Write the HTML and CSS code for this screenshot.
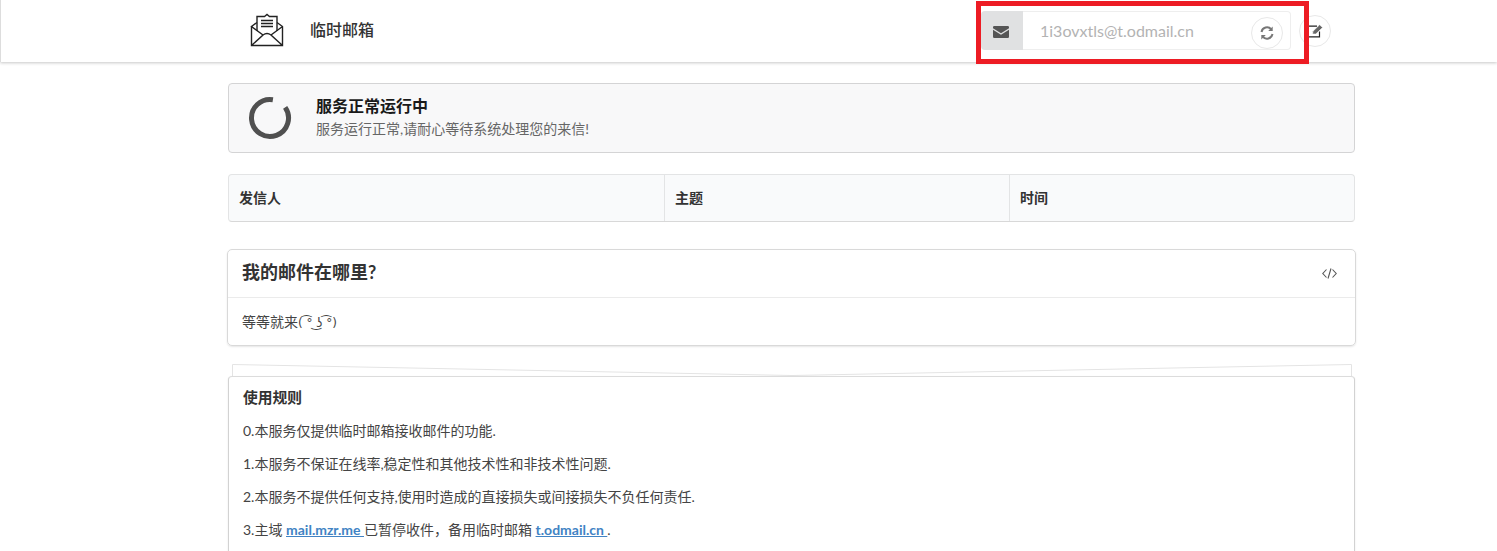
FILE: index.html
```html
<!DOCTYPE html>
<html lang="zh-CN">
<head>
<meta charset="utf-8">
<title>临时邮箱</title>
<link rel="stylesheet" href="styles.css">
</head>
<body>
<header class="topbar">
  <div class="brand">
    <svg class="logo" width="34" height="34" viewBox="0 0 34 34" fill="none" stroke="#222" stroke-width="1.4">
      <path d="M1.5 13.5V32.5H32.5V13.5L27 9.5M7 9.5L1.5 13.5L13 22L1.5 32.5M32.5 13.5L21 22L32.5 32.5M13 22Q17 19 21 22"/>
      <path d="M7 18V3.5H14.5L17 1.5L19.5 3.5H27V18" />
      <path d="M11 7.5H23M11 10.5H23M11 13.5H23" />
    </svg>
    <span class="brand-name">临时邮箱</span>
  </div>
  <div class="tools">
    <div class="addr">
      <span class="addr-label">
        <svg class="mail-icon" width="16" height="12" viewBox="0 0 16 12" fill="#555"><path d="M1.2 0H14.8A1.2 1.2 0 0 1 16 1.2V2.2L8 7.2L0 2.2V1.2A1.2 1.2 0 0 1 1.2 0ZM0 3.8L8 8.8L16 3.8V10.8A1.2 1.2 0 0 1 14.8 12H1.2A1.2 1.2 0 0 1 0 10.8Z"/></svg>
      </span>
      <div class="addr-field">
        <span class="addr-text">1i3ovxtls@t.odmail.cn</span>
        <span class="round-btn">
          <svg width="14" height="14" viewBox="0 0 14 14" fill="none" stroke="#777" stroke-width="2"><path d="M1.5 6A5.6 5.6 0 0 1 11.3 3.4M12.5 8A5.6 5.6 0 0 1 2.7 10.6"/><path d="M12.7 0.5V5H8.2ZM1.3 13.5V9H5.8Z" fill="#777" stroke="none"/></svg>
        </span>
      </div>
    </div>
    <span class="round-btn edit-btn">
      <svg width="17" height="14" viewBox="0 0 17 14" fill="none"><path d="M10 2.2H1.2V12.8H12.5V7.5" stroke="#222" stroke-width="1.2"/><path d="M5.5 10L6 7.2L12.6 .8L15.6 3.6L8.8 10Z" fill="#666" stroke="#fff" stroke-width=".6"/></svg>
    </span>
  </div>
</header>
<div class="highlight-box"></div>

<main class="page">
  <section class="status">
    <svg class="spinner" width="44" height="44" viewBox="0 0 44 44" fill="none"><path d="M37.15 11.38A18.5 18.5 0 1 1 24.9 3.73" stroke="#505050" stroke-width="5"/></svg>
    <div class="status-text">
      <div class="status-title">服务正常运行中</div>
      <div class="status-sub">服务运行正常,请耐心等待系统处理您的来信!</div>
    </div>
  </section>

  <section class="mail-table">
    <div class="th th-from">发信人</div>
    <div class="th th-subject">主题</div>
    <div class="th th-time">时间</div>
  </section>

  <section class="card">
    <div class="card-head">
      <h2 class="card-title">我的邮件在哪里?</h2>
      <svg class="code-icon" width="15" height="11" viewBox="0 0 15 11" fill="none" stroke="#555" stroke-width="1.1"><path d="M4.5 1.5L.8 5.5L4.5 9.5M10.5 1.5L14.2 5.5L10.5 9.5M9 .5L6 10.5"/></svg>
    </div>
    <div class="card-body">等等就来<span class="kaomoji">( ͡° ͜ʖ ͡°)</span></div>
  </section>

  <section class="stack">
    <svg class="stack-back" width="1120" height="12" viewBox="0 0 1120 12" preserveAspectRatio="none" fill="none" stroke="#e4e4e4"><path d="M.5 12V.5L560 11.5L1119.5 .5V12"/></svg>
    <div class="rules">
      <h3 class="rules-title">使用规则</h3>
      <p>0.本服务仅提供临时邮箱接收邮件的功能.</p>
      <p>1.本服务不保证在线率,稳定性和其他技术性和非技术性问题.</p>
      <p>2.本服务不提供任何支持,使用时造成的直接损失或间接损失不负任何责任.</p>
      <p>3.主域 <a href="#">mail.mzr.me </a>已暂停收件，备用临时邮箱 <a href="#">t.odmail.cn </a>.</p>
    </div>
  </section>
</main>
</body>
</html>
```

FILE: styles.css
```css
* { box-sizing: border-box; }
html, body { margin: 0; height: 551px; overflow: hidden; }
body {
  background: #fff;
  color: #333;
  font-family: Lato, "Noto Sans CJK SC", sans-serif;
  font-size: 14px;
  line-height: 20px;
  position: relative;
}
.topbar {
  height: 62px;
  display: flex;
  align-items: center;
  justify-content: space-between;
  padding: 0 166px 0 249px;
  border-left: 1px solid #ddd;
  box-shadow: 0 1px 3px rgba(0, 0, 0, .22);
}
.brand { display: flex; align-items: center; margin-top: -2px; }
.logo { display: block; }
.brand-name { margin-left: 26px; font-size: 16px; font-weight: 500; color: #333; }
.tools { display: flex; align-items: center; }
.addr { display: flex; height: 39px; width: 310px; margin-top: -1px; }
.addr-label {
  width: 42px;
  background: #e0e1e2;
  border-radius: 4px 0 0 4px;
  display: flex;
  align-items: center;
  justify-content: center;
}
.mail-icon { margin: 3px 2px 0 0; }
.addr-field {
  flex: 1;
  border: 1px solid #eee;
  border-left: 0;
  border-radius: 0 4px 4px 0;
  display: flex;
  align-items: center;
  justify-content: space-between;
  padding: 0 7px 0 17px;
}
.addr-text { color: #b3b3b3; font-size: 16px; }
.round-btn {
  width: 32px;
  height: 32px;
  border: 1px solid #e8e8e8;
  border-radius: 50%;
  background: #fff;
  display: inline-flex;
  align-items: center;
  justify-content: center;
  flex: none;
  margin-top: 5px;
}
.edit-btn { margin: 0 0 0 8px; }
.highlight-box {
  position: absolute;
  left: 976px;
  top: 1px;
  width: 333px;
  height: 63px;
  border: 5px solid #ed1c24;
  pointer-events: none;
}
.page { margin-left: 228px; width: 1127px; padding-top: 21px; }
.status {
  height: 70px;
  background: #f8f8f9;
  border: 1px solid #d4d4d5;
  border-radius: 4px;
  display: flex;
  align-items: center;
  padding-left: 19px;
}
.spinner { flex: none; }
.status-text { margin-left: 24px; margin-top: -3px; }
.status-title { font-size: 16px; font-weight: 700; color: #1a1a1a; line-height: 22px; }
.status-sub { font-size: 14px; color: #666; line-height: 20px; margin-top: 2px; }
.mail-table {
  height: 48px;
  margin-top: 21px;
  background: #f9fafb;
  border: 1px solid #e3e4e5;
  border-bottom-color: #d8d8d8;
  border-radius: 4px;
  display: grid;
  grid-template-columns: 435px 345px 1fr;
}
.th {
  display: flex;
  align-items: center;
  padding: 0 0 0 10px;
  font-size: 14px;
  font-weight: 700;
  color: #333;
  border-left: 1px solid #e3e4e5;
}
.th-from { border-left: 0; }
.card {
  width: 1129px;
  height: 97px;
  margin: 27px 0 0 -1px;
  border: 1px solid #d9d9d9;
  border-radius: 5px;
  box-shadow: 0 1px 2px rgba(0, 0, 0, .1);
}
.card-head {
  height: 48px;
  display: flex;
  align-items: center;
  justify-content: space-between;
  padding: 0 18px 0 14px;
  border-bottom: 1px solid #ebebeb;
}
.card-title { margin: 0 0 3px; font-size: 18px; font-weight: 700; color: #333; }
.card-body { padding: 14px 14px; font-size: 14px; color: #444; }
.kaomoji { font-family: "DejaVu Sans", sans-serif; font-size: 12px; }
.stack { position: relative; margin-top: 18px; padding-top: 12px; }
.stack-back { position: absolute; left: 4px; top: 0; display: block; }
.rules {
  position: relative;
  height: 190px;
  border: 1px solid #dcdcdc;
  border-left-color: #d2d2d2;
  border-right-color: #d2d2d2;
  border-radius: 4px;
  padding: 10px 14px;
  background: #fff;
  box-shadow: 0 1px 2px rgba(0, 0, 0, .1);
}
.rules-title { margin: 0 0 14px; font-size: 14.75px; font-weight: 700; line-height: 20px; color: #333; }
.rules p { margin: 0 0 13px; font-size: 14px; line-height: 20px; color: #444; }
.rules a { color: #4183c4; font-weight: 700; text-decoration: underline; }
```
